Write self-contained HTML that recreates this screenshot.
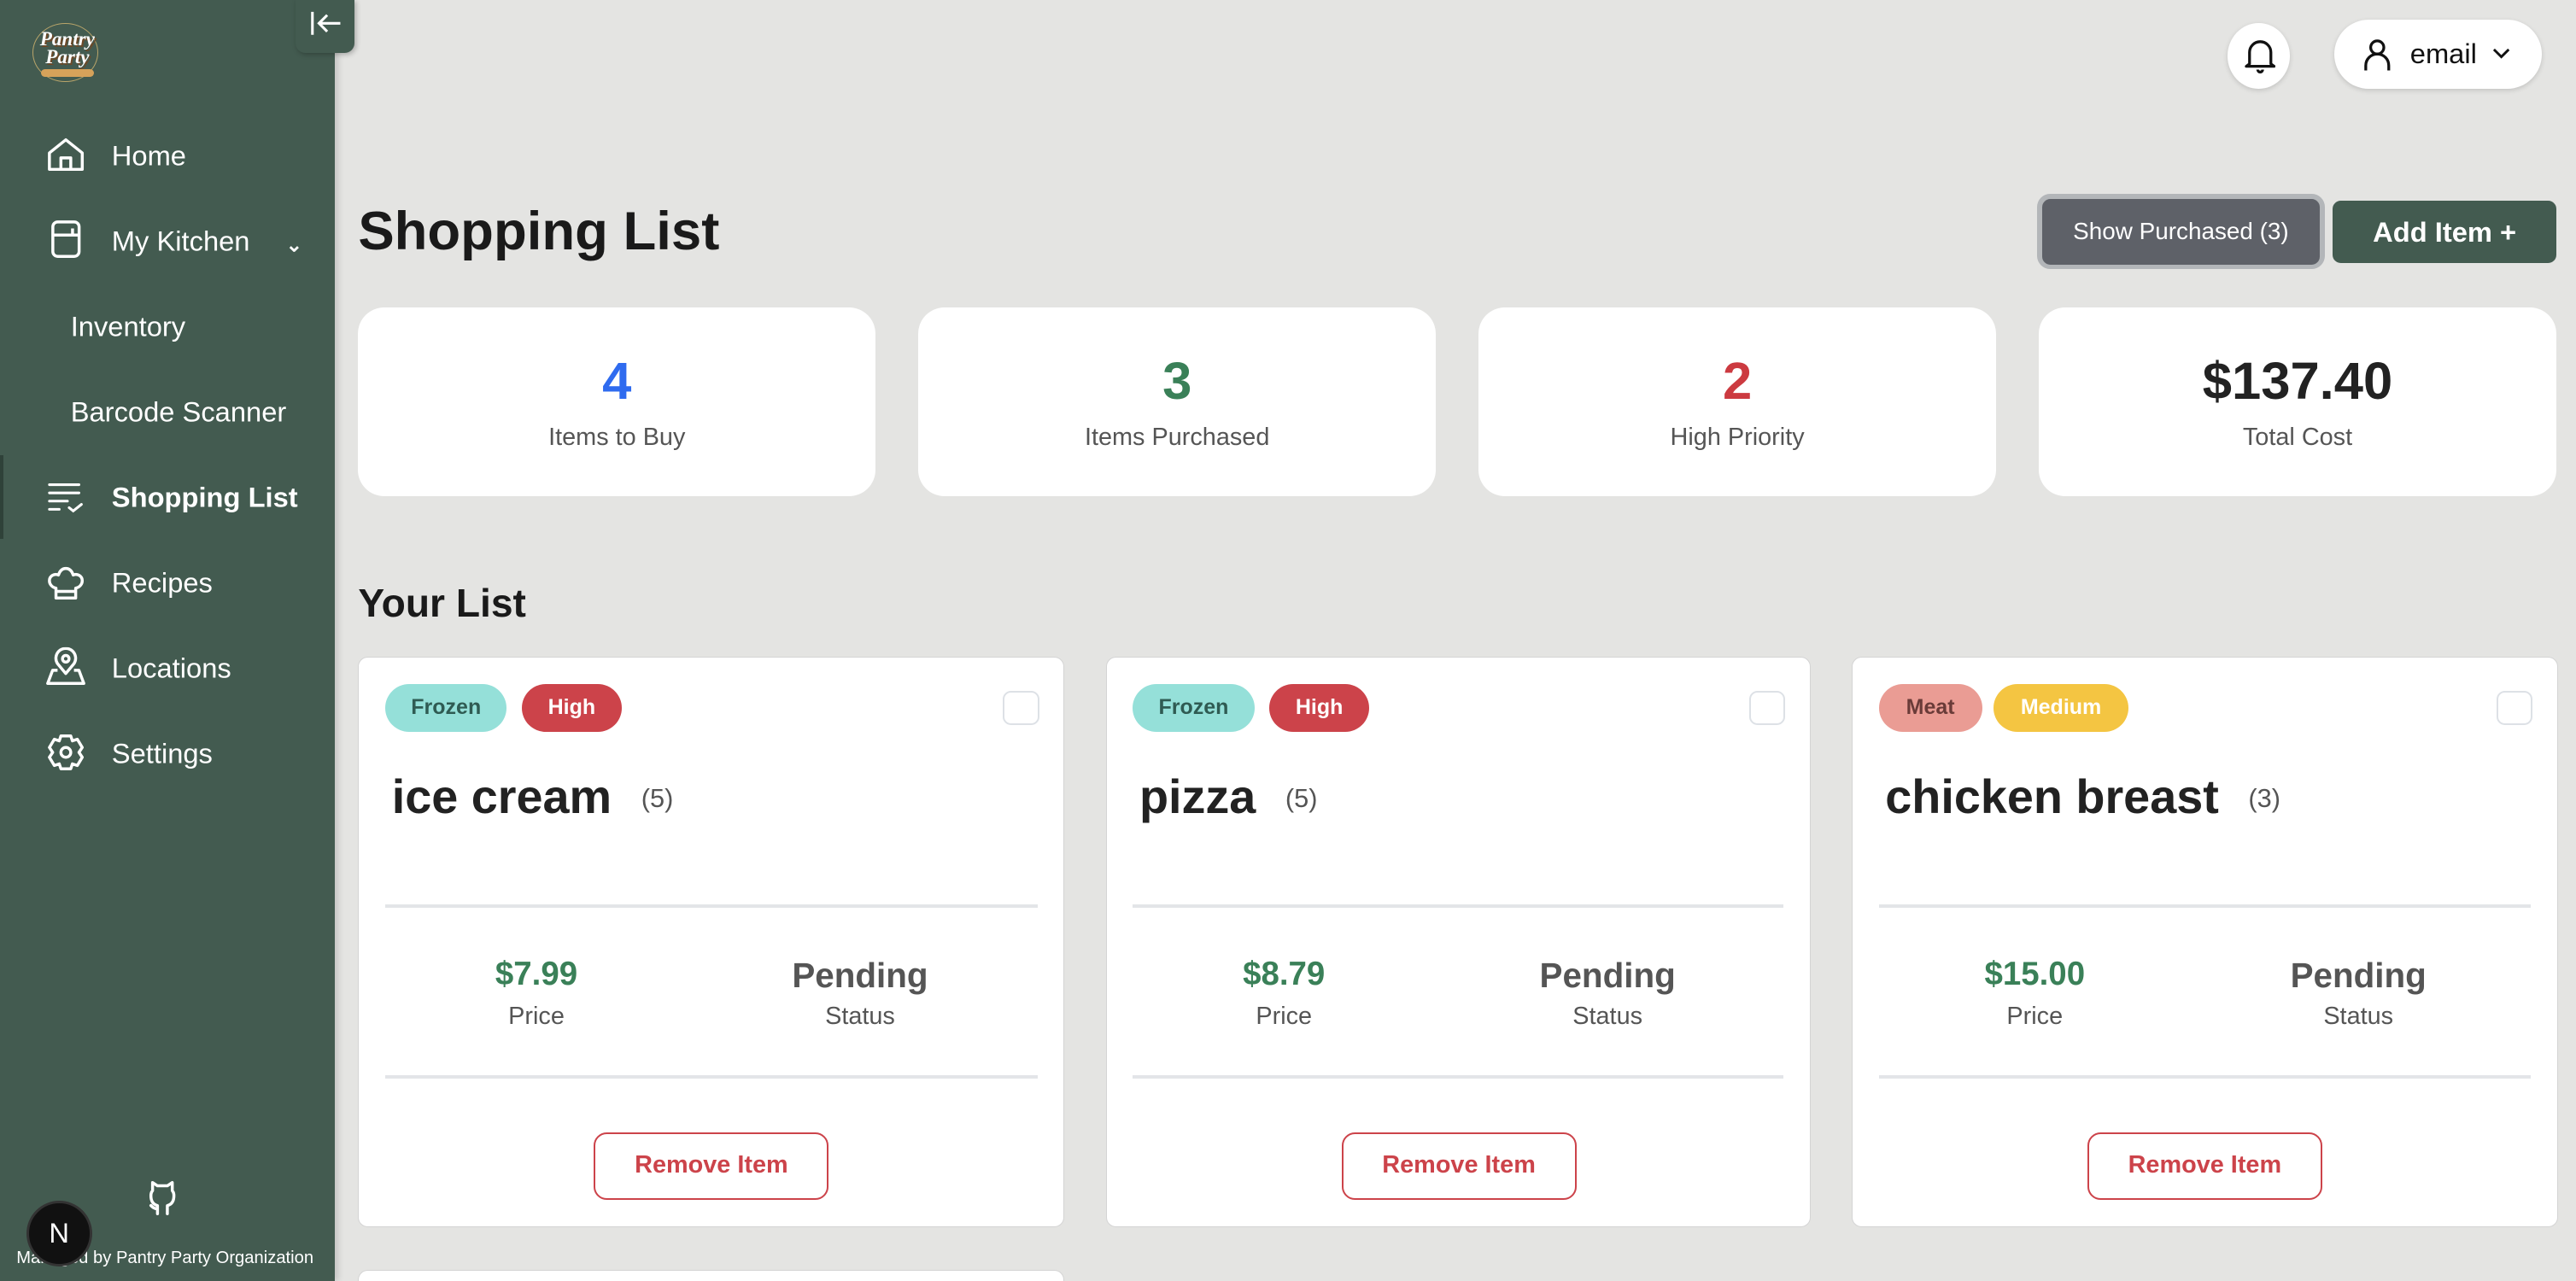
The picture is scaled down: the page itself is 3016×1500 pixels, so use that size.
<!DOCTYPE html>
<html><head><meta charset="utf-8">
<style>
*{box-sizing:border-box;margin:0;padding:0}
html,body{width:3016px;height:1500px;overflow:hidden;background:#e4e4e2}
#root{zoom:1.9235;width:1568px;height:780px;position:relative;font-family:"Liberation Sans",Arial,sans-serif;background:#e4e4e2;overflow:hidden}
.abs{position:absolute}
.sb{left:0;top:0;width:204px;height:780px;background:#435b50;box-shadow:2px 0 4px rgba(0,0,0,.15)}
.nav{position:absolute;color:#fff;font-size:17px;line-height:20px;transform:translateY(-9px)}
.ic{position:absolute;transform:translateY(-12px)}
.card{position:absolute;background:#fff;border-radius:16px;top:187px;height:115px;width:315px;text-align:center}
.card .n{position:absolute;left:0;right:0;top:28px;font-size:32px;font-weight:bold;line-height:34px}
.card .l{position:absolute;left:0;right:0;top:71px;font-size:15px;color:#555}
.item{position:absolute;top:400px;height:347px;background:#fff;border:1px solid #d4d4d4;border-radius:6px}
.badge{position:absolute;top:16px;height:29px;border-radius:15px;font-size:13px;font-weight:bold;line-height:29px;text-align:center}
.chk{position:absolute;top:20px;width:22px;height:21px;border:1.5px solid #dde1e6;border-radius:5px}
.nm{position:absolute;left:20px;top:68px;font-size:29px;font-weight:bold;color:#222;white-space:nowrap}
.nm span{font-size:16px;font-weight:normal;color:#555;margin-left:18px;vertical-align:4px}
.hr{position:absolute;left:16px;right:16px;height:2px;background:#e3e5e8}
.val{position:absolute;top:181px;width:200px;text-align:center;font-size:20px;font-weight:bold}
.lab{position:absolute;top:210px;width:200px;text-align:center;font-size:15px;color:#555}
.rm{position:absolute;top:289px;width:143px;height:41px;border:1.5px solid #cc434a;border-radius:8px;color:#cc434a;font-weight:bold;font-size:15px;line-height:38px;text-align:center}
</style></head><body><div id="root">
<div class="abs sb"></div>
<div class="abs" style="left:180px;top:0;width:36px;height:32px;background:#435b50;border-radius:0 0 6px 6px;box-shadow:1px 1px 3px rgba(0,0,0,.25)"></div>
<svg class="abs" style="left:187px;top:5px" width="22" height="18" viewBox="0 0 22 18" fill="none" stroke="#fff" stroke-width="1.6"><path d="M3 2v14M20 9H7M12 4L7 9l5 5"/></svg>
<div class="abs" style="left:20px;top:14px;width:40px;height:36px;border-radius:50%;border:1px solid #b9a56a"></div>
<div class="abs" style="left:20px;top:18px;font-family:'Liberation Serif',serif;font-style:italic;font-weight:bold;font-size:12px;line-height:11px;color:#fff;text-align:center;width:42px;text-shadow:1px 1px 0 #6b4a2a">Pantry<br>Party</div>
<div class="abs" style="left:25px;top:42px;width:32px;height:5px;background:#d6a25a;border-radius:3px"></div>
<svg class="ic" style="left:28px;top:94px" width="24" height="24" viewBox="0 0 24 24" fill="none" stroke="#fff" stroke-width="1.8" stroke-linejoin="round"><path d="M2 21V11L12 3l10 8v10zM9 21v-7h6v7"/></svg>
<svg class="ic" style="left:30px;top:146px" width="20" height="24" viewBox="0 0 20 24" fill="none" stroke="#fff" stroke-width="1.8"><rect x="2" y="1" width="16" height="21" rx="3"/><path d="M2 9h16M14 5v4"/></svg>
<svg class="ic" style="left:28px;top:302px" width="24" height="24" viewBox="0 0 24 24" fill="none" stroke="#fff" stroke-width="1.6" stroke-linecap="round"><path d="M2 5h18M2 10h18M2 15h11M2 20h6M14 19l2.5 2 5-4"/></svg>
<svg class="ic" style="left:28px;top:354px" width="24" height="24" viewBox="0 0 24 24" fill="none" stroke="#fff" stroke-width="1.8" stroke-linejoin="round"><path d="M6 22h12v-6c2.5-.5 4-2.5 4-4.5 0-3-3-4.5-5.5-3.5C15.5 5 14 4 12 4S8.5 5 7.5 8C5 7 2 8.5 2 11.5c0 2 1.5 4 4 4.5zM6 18h12"/></svg>
<svg class="ic" style="left:27px;top:406px" width="26" height="24" viewBox="0 0 26 24" fill="none" stroke="#fff" stroke-width="1.8" stroke-linejoin="round"><path d="M13 16l-5-6a6 6 0 1 1 10 0z"/><circle cx="13" cy="7" r="2"/><path d="M8 14H5l-3 8h22l-3-8h-3"/></svg>
<svg class="ic" style="left:28px;top:458px" width="24" height="24" viewBox="0 0 24 24" fill="none" stroke="#fff" stroke-width="1.8" stroke-linejoin="round"><path d="M9 2h6l1 3 3-1 3 5-2 3 2 3-3 5-3-1-1 3H9l-1-3-3 1-3-5 2-3-2-3 3-5 3 1z"/><circle cx="12" cy="12" r="3"/></svg>
<div class="nav" style="left:68px;top:94px">Home</div>
<div class="nav" style="left:68px;top:146px">My Kitchen</div>
<div class="nav" style="left:174px;top:148px;font-size:12px;font-weight:bold">&#8964;</div>
<div class="nav" style="left:43px;top:198px">Inventory</div>
<div class="nav" style="left:43px;top:250px">Barcode Scanner</div>
<div class="abs" style="left:0;top:277px;width:2px;height:51px;background:#2f4239"></div>
<div class="nav" style="left:68px;top:302px;font-weight:bold">Shopping List</div>
<div class="nav" style="left:68px;top:354px">Recipes</div>
<div class="nav" style="left:68px;top:406px">Locations</div>
<div class="nav" style="left:68px;top:458px">Settings</div>
<svg class="abs" style="left:88px;top:716px" width="22" height="24" viewBox="0 0 22 24" fill="none" stroke="#fff" stroke-width="1.8" stroke-linecap="round" stroke-linejoin="round"><path d="M8 23v-5c-2-.5-4-2-4-6 0-1.5.5-2.5 1-3V4l3 2h6l3-2v5c.5.5 1 1.5 1 3 0 4-2 5.5-4 6v5M8 20c-2 0-3-1-4-2"/></svg>
<div class="abs" style="left:10px;top:760px;font-size:10.5px;color:#fff;white-space:nowrap">Managed by Pantry Party Organization</div>
<div class="abs" style="left:16px;top:731px;width:40px;height:40px;border-radius:50%;background:#111;border:2px solid #333;color:#fff;font-size:17px;line-height:36px;text-align:center">N</div>
<div class="abs" style="left:1356px;top:14px;width:38px;height:40px;border-radius:50%;background:#fff;box-shadow:0 1px 3px rgba(0,0,0,.15)"></div>
<svg class="abs" style="left:1366px;top:23px" width="19" height="22" viewBox="0 0 19 22" fill="none" stroke="#111" stroke-width="1.7" stroke-linejoin="round"><path d="M3 16V9a6.5 6.5 0 0 1 13 0v7l2 1.5H1zM8 19.5a1.5 1.5 0 0 0 3 0"/></svg>
<div class="abs" style="left:1421px;top:12px;width:126px;height:42px;border-radius:21px;background:#fff;box-shadow:0 1px 3px rgba(0,0,0,.15)"></div>
<svg class="abs" style="left:1438px;top:23px" width="18" height="21" viewBox="0 0 18 21" fill="none" stroke="#111" stroke-width="1.7"><circle cx="9" cy="6" r="4"/><path d="M2 20v-3a7 7 0 0 1 14 0v3"/></svg>
<div class="abs" style="left:1467px;top:23px;font-size:17px;color:#111">email</div>
<svg class="abs" style="left:1517px;top:29px" width="11" height="8" viewBox="0 0 11 8" fill="none" stroke="#111" stroke-width="1.5"><path d="M1 1l4.5 4.5L10 1"/></svg>
<div class="abs" style="left:218px;top:122px;font-size:33px;font-weight:bold;color:#1a1a1a">Shopping List</div>
<div class="abs" style="left:1240px;top:118px;width:175px;height:46px;border-radius:8px;background:#b3b6b9"></div>
<div class="abs" style="left:1243px;top:121px;width:169px;height:40px;border-radius:5px;background:#5e6168;color:#fff;font-size:14.5px;line-height:40px;text-align:center">Show Purchased (3)</div>
<div class="abs" style="left:1420px;top:122px;width:136px;height:38px;border-radius:5px;background:#435b50;color:#fff;font-size:17px;font-weight:bold;line-height:38px;text-align:center">Add Item +</div>
<div class="card" style="left:218px"><div class="n" style="color:#2f6bef">4</div><div class="l">Items to Buy</div></div>
<div class="card" style="left:559px"><div class="n" style="color:#3a8058">3</div><div class="l">Items Purchased</div></div>
<div class="card" style="left:900px"><div class="n" style="color:#cc3a40">2</div><div class="l">High Priority</div></div>
<div class="card" style="left:1241px"><div class="n" style="color:#222">$137.40</div><div class="l">Total Cost</div></div>
<div class="abs" style="left:218px;top:353px;font-size:24px;font-weight:bold;color:#1a1a1a">Your List</div>
<div class="item" style="left:218px;width:430px">
<div class="badge" style="left:16px;width:74px;background:#95e0d9;color:#2f5b53">Frozen</div>
<div class="badge" style="left:99px;width:61px;background:#cc434a;color:#fff">High</div>
<div class="chk" style="left:392px"></div>
<div class="nm">ice cream<span>(5)</span></div>
<div class="hr" style="top:150px"></div>
<div class="val" style="left:8px;color:#3a8058">$7.99</div><div class="lab" style="left:8px">Price</div>
<div class="val" style="left:205px;color:#555;font-size:21px">Pending</div><div class="lab" style="left:205px">Status</div>
<div class="hr" style="top:254px"></div>
<div class="rm" style="left:143px">Remove Item</div>
</div>
<div class="item" style="left:673px;width:429px">
<div class="badge" style="left:16px;width:74px;background:#95e0d9;color:#2f5b53">Frozen</div>
<div class="badge" style="left:99px;width:61px;background:#cc434a;color:#fff">High</div>
<div class="chk" style="left:391px"></div>
<div class="nm">pizza<span>(5)</span></div>
<div class="hr" style="top:150px"></div>
<div class="val" style="left:8px;color:#3a8058">$8.79</div><div class="lab" style="left:8px">Price</div>
<div class="val" style="left:205px;color:#555;font-size:21px">Pending</div><div class="lab" style="left:205px">Status</div>
<div class="hr" style="top:254px"></div>
<div class="rm" style="left:143px">Remove Item</div>
</div>
<div class="item" style="left:1127px;width:430px">
<div class="badge" style="left:16px;width:63px;background:#ea9c94;color:#6a3b38">Meat</div>
<div class="badge" style="left:86px;width:82px;background:#f4c542;color:#fff">Medium</div>
<div class="chk" style="left:392px"></div>
<div class="nm">chicken breast<span>(3)</span></div>
<div class="hr" style="top:150px"></div>
<div class="val" style="left:11px;color:#3a8058">$15.00</div><div class="lab" style="left:11px">Price</div>
<div class="val" style="left:208px;color:#555;font-size:21px">Pending</div><div class="lab" style="left:208px">Status</div>
<div class="hr" style="top:254px"></div>
<div class="rm" style="left:143px">Remove Item</div>
</div>
<div class="item" style="left:218px;width:430px;top:773px;height:7px;border-bottom:none;border-radius:6px 6px 0 0"></div>
</div></body></html>
